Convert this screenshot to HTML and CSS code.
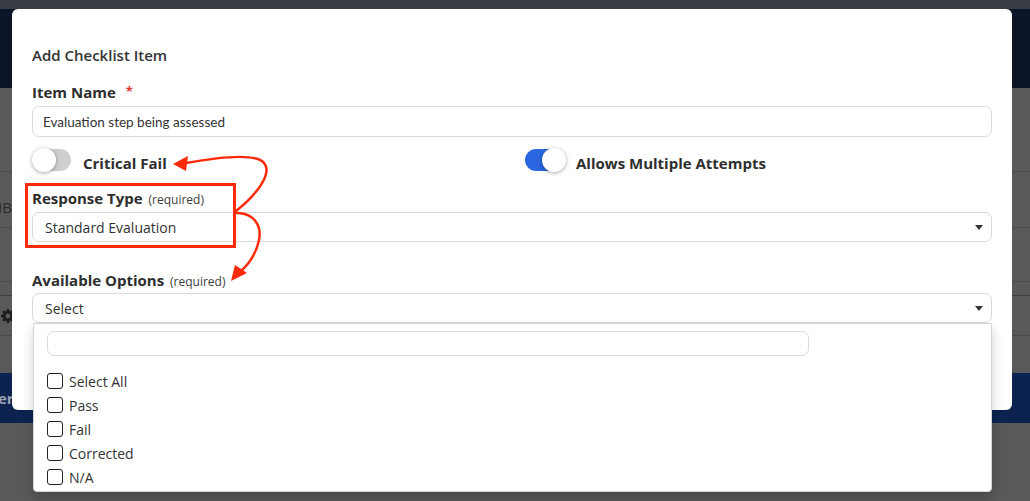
FILE: index.html
```html
<!DOCTYPE html>
<html lang="en">
<head>
<meta charset="utf-8">
<title>Add Checklist Item</title>
<link rel="stylesheet" href="styles.css">
</head>
<body>
<div class="page">
  <!-- dimmed application behind the dialog -->
  <div class="app">
    <div class="topbar"></div>
    <div class="navbar"></div>
    <div class="rows">
      <div class="row r1"></div>
      <div class="row r2"><span class="cell-text">IB</span></div>
      <div class="row r3"></div>
      <div class="row r4"></div>
      <div class="row r5">
        <svg class="gear" viewBox="0 0 16 16" width="14" height="14"><path fill="#1c1c1c" d="M8 0l1.3.2.3 2 1.2.6 1.7-1.2 1.8 1.8-1.2 1.7.6 1.2 2 .3L16 8l-.2 1.3-2 .3-.6 1.2 1.2 1.7-1.8 1.8-1.7-1.2-1.2.6-.3 2L8 16l-1.3-.2-.3-2-1.2-.6-1.7 1.2-1.8-1.8 1.2-1.7-.6-1.2-2-.3L0 8l.2-1.3 2-.3.6-1.2-1.2-1.7 1.8-1.8 1.7 1.2 1.2-.6.3-2zM8 5.2A2.8 2.8 0 1 0 8 10.8 2.8 2.8 0 1 0 8 5.2z"/></svg>
      </div>
      <div class="row r6"></div>
    </div>
    <div class="band"><span class="band-text">er</span></div>
  </div>

  <!-- dialog -->
  <div class="modal">
    <h2 class="modal-title">Add Checklist Item</h2>

    <label class="field-label">Item Name <span class="req">*</span></label>
    <div class="text-input">Evaluation step being assessed</div>

    <div class="toggles">
      <div class="toggle-item">
        <span class="switch"><span class="knob"></span></span>
        <span class="toggle-label">Critical Fail</span>
      </div>
      <div class="toggle-item">
        <span class="switch on"><span class="knob"></span></span>
        <span class="toggle-label">Allows Multiple Attempts</span>
      </div>
    </div>

    <label class="field-label gap-top">Response Type <span class="hint">(required)</span></label>
    <div class="select">Standard Evaluation<span class="caret"></span></div>

    <label class="field-label gap-top-lg">Available Options <span class="hint">(required)</span></label>
    <div class="select-wrap">
      <div class="select open">Select<span class="caret"></span></div>
      <div class="menu">
        <div class="menu-search"></div>
        <ul class="options">
          <li><span class="box"></span>Select All</li>
          <li><span class="box"></span>Pass</li>
          <li><span class="box"></span>Fail</li>
          <li><span class="box"></span>Corrected</li>
          <li><span class="box"></span>N/A</li>
        </ul>
      </div>
    </div>
  </div>

  <!-- callout marks -->
  <div class="callout-box"></div>
  <svg class="callout-arrows" width="1030" height="501" viewBox="0 0 1030 501">
    <path d="M236 211 C 254 197, 276 172, 262 161 C 250 153, 214 158, 186 163" />
    <polygon points="173,164 188,156 186,171" />
    <path d="M237 213 C 254 213, 262 226, 259 240 C 256 255, 249 264, 240 272" />
    <polygon points="231,281 235,265 247,273" />
  </svg>
</div>
</body>
</html>
```

FILE: styles.css
```css
* { box-sizing: border-box; }

html, body {
  margin: 0;
  padding: 0;
}

body {
  background: #595959;
  font-family: "Open Sans", "Liberation Sans", sans-serif;
  color: #333;
}

.page {
  position: relative;
  width: 1030px;
  height: 501px;
  overflow: hidden;
}

/* ---------- dimmed application ---------- */
.app {
  display: flex;
  flex-direction: column;
}

.topbar {
  height: 9px;
  background: #393c44;
}

.navbar {
  height: 79px;
  background: #0b1527;
}

.rows {
  display: flex;
  flex-direction: column;
}

.row {
  border-bottom: 1px solid #4a4a4a;
  display: flex;
  align-items: center;
}

.r1 { height: 84px; }
.r2 { height: 56px; padding-top: 14px; }
.r3 { height: 54px; }
.r4 { height: 14px; border-bottom-color: #3f3f3f; }
.r5 { height: 40px; }
.r6 { height: 37px; border-bottom: none; }

.cell-text {
  font-size: 15px;
  color: #2c2c2c;
  margin-left: -2px;
}

.gear {
  margin-left: 1px;
}

.band {
  height: 50px;
  background: #0c2350;
  display: flex;
  align-items: center;
}

.band-text {
  color: #9aa3b5;
  font-size: 15px;
  font-weight: 700;
  margin-left: -2px;
}

/* ---------- dialog ---------- */
.modal {
  position: absolute;
  left: 12px;
  top: 9px;
  width: 1000px;
  height: 401px;
  background: #fff;
  border-radius: 6px;
  padding: 36px 20px 0;
  display: flex;
  flex-direction: column;
}

.modal-title {
  margin: 0 0 17px;
  height: 20px;
  font-size: 15px;
  line-height: 20px;
  font-weight: 600;
  color: #333;
}

.field-label {
  display: flex;
  align-items: baseline;
  height: 20px;
  font-size: 15px;
  line-height: 20px;
  font-weight: 700;
  color: #2e2e2e;
  margin-bottom: 4px;
  white-space: pre;
}

.gap-top { margin-top: 13px; }
.gap-top-lg { margin-top: 28px; margin-bottom: 3px; }

.req {
  color: #e03a3a;
  font-size: 13px;
  line-height: 13px;
  margin-left: 6px;
  position: relative;
  top: -2px;
}

.hint {
  font-size: 12px;
  line-height: 12px;
  font-weight: 400;
  color: #3d3d3d;
  margin-left: 2px;
}

.text-input {
  height: 31px;
  border: 1px solid #dadada;
  border-radius: 7px;
  padding: 0 10px;
  display: flex;
  align-items: center;
  font-family: Lato, "Open Sans", sans-serif;
  font-size: 13.5px;
  color: #333;
}

/* toggles */
.toggles {
  display: grid;
  grid-template-columns: 493px 1fr;
  height: 28px;
  margin-top: 10px;
  align-items: center;
}

.toggle-item {
  display: flex;
  align-items: center;
  height: 28px;
}

.toggle-item:first-child { padding-left: 1px; }

.switch {
  position: relative;
  width: 38px;
  height: 22px;
  border-radius: 11px;
  background: #cfcfcf;
  display: inline-block;
  flex: none;
  top: -1px;
}

.switch .knob {
  position: absolute;
  top: -1px;
  left: -1px;
  width: 24px;
  height: 24px;
  border-radius: 50%;
  background: #fff;
  box-shadow: 0 1px 4px rgba(0, 0, 0, 0.35);
}

.switch.on {
  width: 40px;
  background: #2a66df;
}

.switch.on .knob {
  left: auto;
  right: -1px;
}

.toggle-label {
  margin-left: 12px;
  font-size: 15px;
  font-weight: 700;
  color: #2e2e2e;
  line-height: 20px;
  position: relative;
  top: 2px;
}

.switch.on + .toggle-label { margin-left: 11px; }

/* selects */
.select {
  position: relative;
  height: 30px;
  border: 1px solid #d9d9d9;
  border-radius: 7px;
  padding: 0 12px;
  display: flex;
  align-items: center;
  font-size: 14px;
  color: #333;
  background: #fff;
}

.caret {
  position: absolute;
  right: 8px;
  top: 50%;
  margin-top: -2px;
  width: 0;
  height: 0;
  border-left: 4px solid transparent;
  border-right: 4px solid transparent;
  border-top: 5px solid #333;
}

.select-wrap {
  position: relative;
}

.menu {
  position: absolute;
  left: 1px;
  right: 0;
  top: 100%;
  height: 169px;
  background: #fff;
  border: 1px solid #d6d6d6;
  border-radius: 0 0 4px 4px;
  box-shadow: 0 6px 12px rgba(0, 0, 0, 0.18);
  padding: 7px 0 0 13px;
  z-index: 2;
}

.menu-search {
  width: 762px;
  height: 25px;
  border: 1px solid #dadada;
  border-radius: 7px;
}

.options {
  list-style: none;
  margin: 13px 0 0;
  padding: 0;
}

.options li {
  height: 24px;
  display: flex;
  align-items: center;
  font-size: 14px;
  color: #333;
}

.box {
  width: 16px;
  height: 16px;
  border: 1.5px solid #222;
  border-radius: 3px;
  margin-right: 6px;
  flex: none;
}

/* ---------- callout marks ---------- */
.callout-box {
  position: absolute;
  left: 25px;
  top: 183px;
  width: 211px;
  height: 65px;
  border: 3px solid #ff2a0a;
}

.callout-arrows {
  position: absolute;
  left: 0;
  top: 0;
  pointer-events: none;
}

.callout-arrows path {
  fill: none;
  stroke: #ff2a0a;
  stroke-width: 2.5;
  stroke-linecap: round;
}

.callout-arrows polygon {
  fill: #ff2a0a;
}
```
